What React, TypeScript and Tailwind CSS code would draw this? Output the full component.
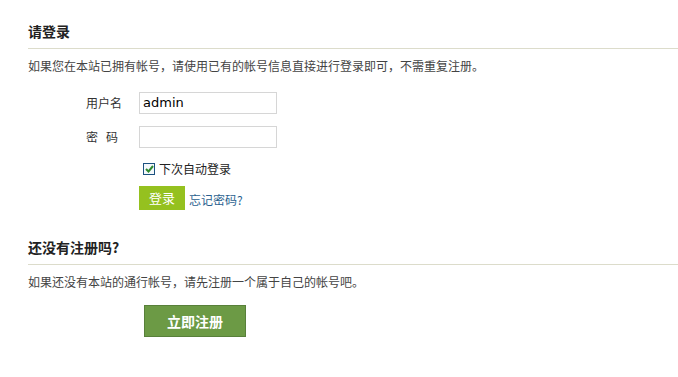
export default function App() {
  const font = { fontFamily: '"Noto Sans CJK SC", "Liberation Sans", sans-serif' };
  return (
    <div className="w-[678px] h-[377px] bg-white text-[#333] overflow-hidden" style={font}>
      <div className="pl-[28px] pt-[20px]">
        <h2 className="text-[14px] leading-[22px] font-bold text-[#222] h-[22px]">请登录</h2>
        <div className="mt-[6px] h-px bg-[#dcdccb]" />
        <p className="mt-[10px] text-[12px] leading-[14px] text-[#444]">
          如果您在本站已拥有帐号，请使用已有的帐号信息直接进行登录即可，不需重复注册。
        </p>
        <div className="mt-[19px] flex flex-col">
          <div className="flex items-center h-[22px]">
            <span className="w-[53px] ml-[58px] text-[12px] text-[#333]">用户名</span>
            <div className="w-[138px] h-[22px] border border-[#d6d6d6] flex items-center pl-[3px] text-[13px] text-black" style={{ fontFamily: '"DejaVu Sans", sans-serif' }}>
              admin
            </div>
          </div>
          <div className="flex items-center h-[22px] mt-[12px]">
            <span className="w-[53px] ml-[58px] text-[12px] text-[#333]">密&nbsp;&nbsp;&nbsp;码</span>
            <div className="w-[138px] h-[22px] border border-[#d6d6d6]" />
          </div>
          <div className="flex items-center mt-[14px] ml-[115px] h-[14px]">
            <span className="w-[12px] h-[12px] border border-[#1c5180] bg-[#f4f8fb] flex items-center justify-center">
              <svg width="9" height="8" viewBox="0 0 9 8">
                <path d="M1 4 L3.5 6.5 L8 1" stroke="#2f8a2f" strokeWidth="2" fill="none" />
              </svg>
            </span>
            <span className="ml-[4px] text-[12px] text-[#222]">下次自动登录</span>
          </div>
          <div className="flex items-end mt-[10px] ml-[111px]">
            <span className="w-[46px] h-[24px] bg-[#95c11f] text-white text-[13px] flex items-center justify-center">登录</span>
            <span className="ml-[4px] mb-[1px] text-[12px] text-[#2b5f8f]">忘记密码?</span>
          </div>
        </div>
        <h2 className="mt-[26px] text-[14px] leading-[22px] font-bold text-[#222] h-[22px]">还没有注册吗?</h2>
        <div className="mt-[6px] h-px bg-[#dcdccb]" />
        <p className="mt-[10px] text-[12px] leading-[14px] text-[#444]">
          如果还没有本站的通行帐号，请先注册一个属于自己的帐号吧。
        </p>
        <div className="mt-[16px] ml-[116px] w-[102px] h-[32px] bg-[#6c9a45] border border-[#58803a] text-white text-[14px] font-bold flex items-center justify-center">
          立即注册
        </div>
      </div>
    </div>
  );
}
